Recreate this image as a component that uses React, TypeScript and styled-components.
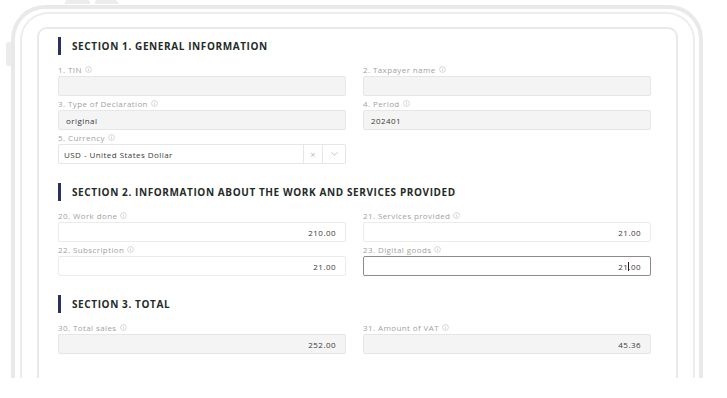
import React from "react";
import styled, { createGlobalStyle, css } from "styled-components";

const GlobalStyle = createGlobalStyle`
  html, body {
    margin: 0;
    padding: 0;
    background: #ffffff;
    font-family: "Open Sans", "Liberation Sans", sans-serif;
  }
`;

const Stage = styled.div`
  position: relative;
  width: 727px;
  height: 378px;
  overflow: hidden;
  padding-top: 5px;
  box-sizing: border-box;
`;

const HardButton = styled.div<{ $left: number; $width: number }>`
  position: absolute;
  top: 0;
  left: ${({ $left }) => $left}px;
  width: ${({ $width }) => $width}px;
  height: 4px;
  border-radius: 3px 3px 0 0;
  background: #ececec;
`;

const SideButton = styled.div`
  position: absolute;
  top: 42px;
  left: 6px;
  width: 5px;
  height: 24px;
  border-radius: 3px 0 0 3px;
  background: #ececec;
`;

const OuterFrame = styled.div`
  margin-left: 11px;
  width: 692px;
  height: 420px;
  box-sizing: border-box;
  border: 4px solid #e9e9e9;
  border-bottom: none;
  border-radius: 34px 34px 0 0;
  padding: 3px 4px 0 5px;
`;

const InnerFrame = styled.div`
  height: 100%;
  box-sizing: border-box;
  border: 2px solid #ededed;
  border-bottom: none;
  border-radius: 28px 28px 0 0;
  padding: 13px 15px 0 15px;
`;

const Screen = styled.div`
  height: 100%;
  box-sizing: border-box;
  border: 2px solid #e9e9e9;
  border-bottom: none;
  border-radius: 10px 10px 0 0;
  padding: 8px 24px 0 19px;
  background: #ffffff;
`;

const SectionTitle = styled.div`
  display: flex;
  align-items: center;
  gap: 11px;
  height: 18px;
  font-size: 10px;
  font-weight: 700;
  letter-spacing: 0.6px;
  color: #1f2b27;
  text-transform: uppercase;

  &::before {
    content: "";
    width: 3px;
    height: 18px;
    background: #2c3060;
  }
`;

const Section = styled.section<{ $first?: boolean }>`
  margin-top: ${({ $first }) => ($first ? 0 : 19)}px;
`;

const Grid = styled.div`
  display: grid;
  grid-template-columns: 288px 288px;
  column-gap: 17px;
  margin-top: 7px;
`;

const Field = styled.div`
  display: flex;
  flex-direction: column;
`;

const Label = styled.div`
  display: flex;
  align-items: center;
  gap: 3px;
  height: 14px;
  font-size: 8px;
  letter-spacing: 0.4px;
  color: #9f9f9f;
`;

const boxBase = css`
  height: 20px;
  box-sizing: border-box;
  border-radius: 2px;
  display: flex;
  align-items: center;
  font-size: 8px;
  letter-spacing: 0.45px;
  color: #3a3a3a;
`;

const Box = styled.div<{ $variant: "filled" | "plain" | "focus"; $right?: boolean }>`
  ${boxBase}
  padding: 0 ${({ $right }) => ($right ? "9px" : "7px")};
  justify-content: ${({ $right }) => ($right ? "flex-end" : "flex-start")};
  ${({ $variant }) =>
    $variant === "filled"
      ? css`
          background: #f4f4f4;
          border: 1px solid #e6e6e6;
        `
      : $variant === "focus"
      ? css`
          background: #ffffff;
          border: 1px solid #8c8c8c;
        `
      : css`
          background: #ffffff;
          border: 1px solid #ebebeb;
        `}
`;

const SelectBox = styled.div`
  ${boxBase}
  background: #ffffff;
  border: 1px solid #e6e6e6;
  padding-left: 5px;
`;

const SelectValue = styled.span`
  flex: 1;
`;

const SelectCell = styled.div<{ $width: number }>`
  width: ${({ $width }) => $width}px;
  height: 100%;
  display: flex;
  align-items: center;
  justify-content: center;
  border-left: 1px solid #e6e6e6;
  color: #bdbdbd;
  font-size: 9px;
`;

const Caret = styled.span`
  display: inline-block;
  width: 1px;
  height: 9px;
  margin: 0 -1px 0 0;
  background: #222;
`;

function Info() {
  return (
    <svg width="7" height="7" viewBox="0 0 12 12">
      <circle cx="6" cy="6" r="5" fill="none" stroke="#c2c2c2" strokeWidth="1.1" />
      <line x1="6" y1="5" x2="6" y2="9" stroke="#c2c2c2" strokeWidth="1.1" />
      <circle cx="6" cy="3.3" r="0.7" fill="#c2c2c2" />
    </svg>
  );
}

type FieldProps = {
  label: string;
  value?: React.ReactNode;
  variant: "filled" | "plain" | "focus";
  right?: boolean;
};

function FormField({ label, value, variant, right }: FieldProps) {
  return (
    <Field>
      <Label>
        {label} <Info />
      </Label>
      <Box $variant={variant} $right={right}>
        {value}
      </Box>
    </Field>
  );
}

export default function App() {
  return (
    <>
      <GlobalStyle />
      <Stage>
        <HardButton $left={65} $width={25} />
        <HardButton $left={95} $width={23} />
        <SideButton />
        <OuterFrame>
          <InnerFrame>
            <Screen>
              <Section $first>
                <SectionTitle>Section 1. General information</SectionTitle>
                <Grid>
                  <FormField label="1. TIN" variant="filled" />
                  <FormField label="2. Taxpayer name" variant="filled" />
                  <FormField label="3. Type of Declaration" variant="filled" value="original" />
                  <FormField label="4. Period" variant="filled" value="202401" />
                  <Field>
                    <Label>
                      5. Currency <Info />
                    </Label>
                    <SelectBox>
                      <SelectValue>USD - United States Dollar</SelectValue>
                      <SelectCell $width={18}>×</SelectCell>
                      <SelectCell $width={22}>
                        <svg width="7" height="4" viewBox="0 0 7 4">
                          <path d="M0.5 0.5 L3.5 3.2 L6.5 0.5" fill="none" stroke="#bdbdbd" strokeWidth="0.9" />
                        </svg>
                      </SelectCell>
                    </SelectBox>
                  </Field>
                </Grid>
              </Section>

              <Section>
                <SectionTitle>Section 2. Information about the work and services provided</SectionTitle>
                <Grid>
                  <FormField label="20. Work done" variant="plain" right value="210.00" />
                  <FormField label="21. Services provided" variant="plain" right value="21.00" />
                  <FormField label="22. Subscription" variant="plain" right value="21.00" />
                  <FormField
                    label="23. Digital goods"
                    variant="focus"
                    right
                    value={
                      <>
                        21<Caret />.00
                      </>
                    }
                  />
                </Grid>
              </Section>

              <Section>
                <SectionTitle>Section 3. Total</SectionTitle>
                <Grid>
                  <FormField label="30. Total sales" variant="filled" right value="252.00" />
                  <FormField label="31. Amount of VAT" variant="filled" right value="45.36" />
                </Grid>
              </Section>
            </Screen>
          </InnerFrame>
        </OuterFrame>
      </Stage>
    </>
  );
}
